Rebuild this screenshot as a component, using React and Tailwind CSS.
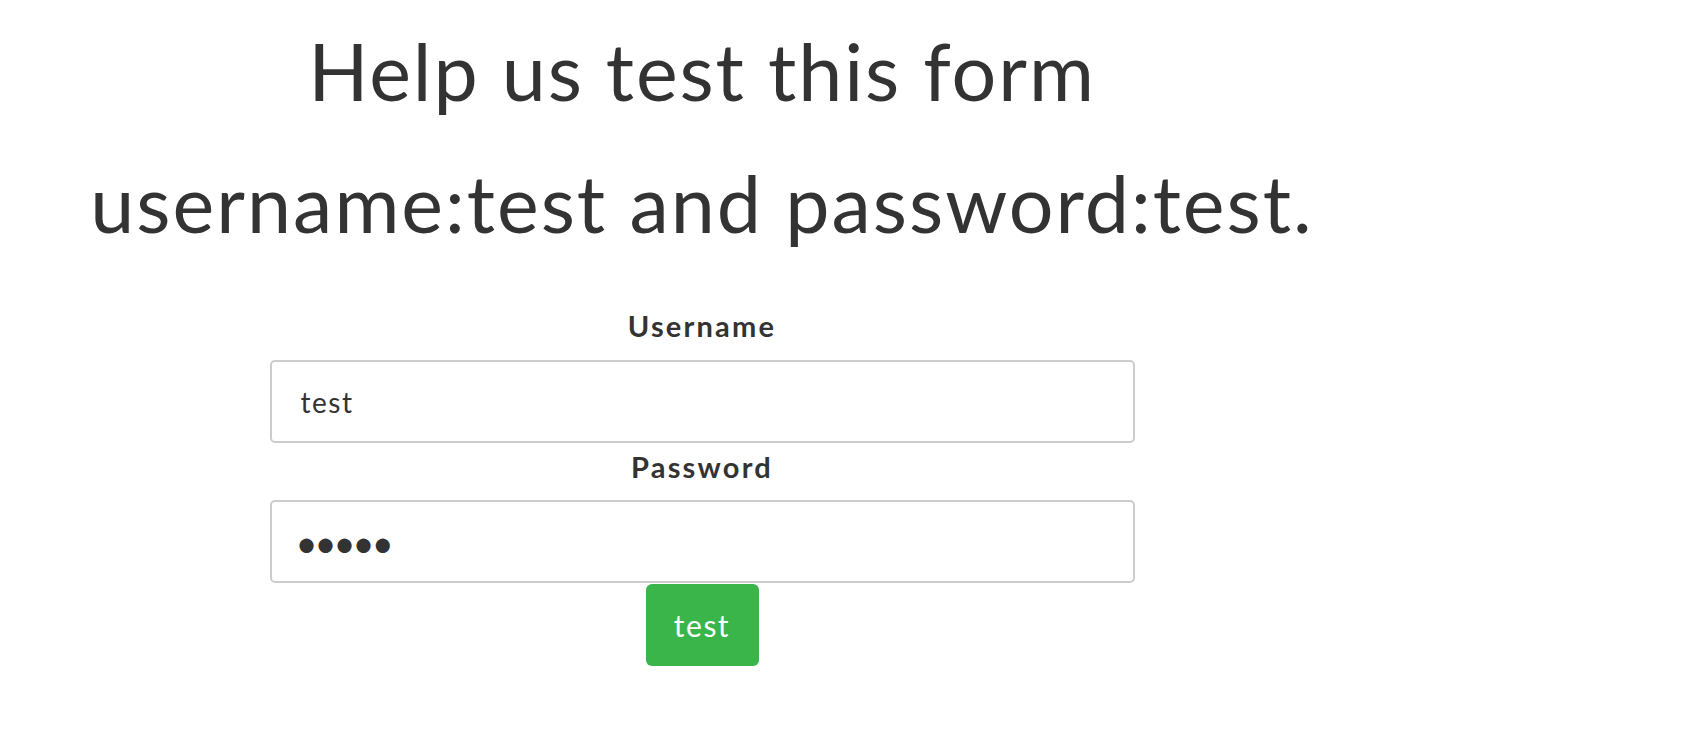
export default function App() {
  return (
    <div
      className="w-[1404px] text-center text-[#333333] pt-[27px]"
      style={{ fontFamily: 'Lato, "Open Sans", sans-serif' }}
    >
      <h1 className="text-[79px] leading-[87px] font-normal tracking-[1.9px]">Help us test this form</h1>
      <h1 className="text-[79px] leading-[87px] font-normal tracking-[2px] mt-[45px]">
        username:test and password:test.
      </h1>

      <form className="mx-auto w-[865px] mt-[64px]" onSubmit={(e) => e.preventDefault()}>
        <label className="block text-[29px] leading-[32px] font-bold tracking-[2.2px] mb-[18px]">Username</label>
        <input
          type="text"
          defaultValue="test"
          className="block w-full h-[83px] border-2 border-[#cccccc] rounded-[5px] px-[29px] text-[28px] tracking-[1.5px] text-[#333333] outline-none"
        />
        <label className="block text-[29px] leading-[32px] font-bold tracking-[2.2px] mt-[8px] mb-[17px]">Password</label>
        <input
          type="password"
          defaultValue="tests"
          className="block w-full h-[83px] border-2 border-[#cccccc] rounded-[5px] pl-[24px] pr-[27px] text-[38px] tracking-[-3px] text-[#333333] outline-none"
        />
        <button
          type="submit"
          className="mt-[1px] w-[113px] h-[82px] bg-[#39b54a] text-white text-[30px] tracking-[1.5px] rounded-[6px]"
        >
          test
        </button>
      </form>
    </div>
  );
}
